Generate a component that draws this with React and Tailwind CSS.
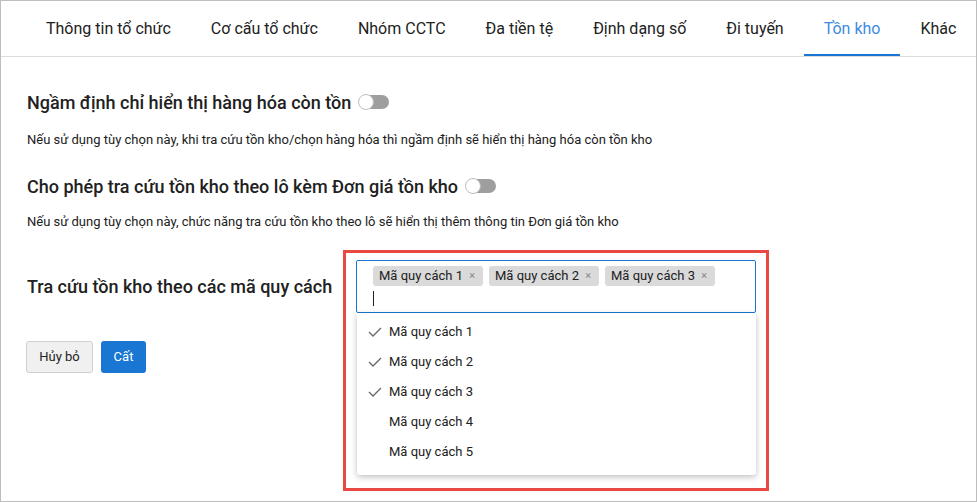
import React from 'react';

const tabs = ['Thông tin tổ chức', 'Cơ cấu tổ chức', 'Nhóm CCTC', 'Đa tiền tệ', 'Định dạng số', 'Đi tuyến', 'Tồn kho', 'Khác'];
const options = [
  { label: 'Mã quy cách 1', checked: true },
  { label: 'Mã quy cách 2', checked: true },
  { label: 'Mã quy cách 3', checked: true },
  { label: 'Mã quy cách 4', checked: false },
  { label: 'Mã quy cách 5', checked: false },
];

const Toggle = () => (
  <div className="relative w-[30px] h-[14px] rounded-full bg-[#9e9e9e] flex items-center">
    <div className="w-[16px] h-[16px] rounded-full bg-white border border-[#bdbdbd] -ml-[1px]" />
  </div>
);

const Check = () => (
  <svg width="14" height="10" viewBox="0 0 14 10" fill="none">
    <path d="M1 5 L5 9 L13 1" stroke="#666" strokeWidth="1.3" />
  </svg>
);

export default function App() {
  return (
    <div className="w-[977px] h-[502px] border border-[#bdbdbd] bg-white overflow-hidden text-[#212121]" style={{ fontFamily: 'Roboto, "Liberation Sans", sans-serif' }}>
      {/* Tabs */}
      <div className="flex h-[56px] border-b border-[#dcdcdc] pl-[25px]">
        {tabs.map((t) => (
          <div
            key={t}
            className={
              'px-5 flex items-center text-[16px] whitespace-nowrap ' +
              (t === 'Tồn kho' ? 'text-[#3d8be0] border-b-2 border-[#1976d2] pt-[2px]' : '')
            }
          >
            {t}
          </div>
        ))}
      </div>

      <div className="pl-[26px] pt-[33px]">
        <div className="flex items-center gap-[8px] h-[24px]">
          <span className="text-[18px] font-medium">Ngầm định chỉ hiển thị hàng hóa còn tồn</span>
          <Toggle />
        </div>
        <div className="mt-[16px] h-[20px] flex items-center text-[13px]">
          Nếu sử dụng tùy chọn này, khi tra cứu tồn kho/chọn hàng hóa thì ngầm định sẽ hiển thị hàng hóa còn tồn kho
        </div>

        <div className="mt-[24px] flex items-center gap-[8px] h-[24px]">
          <span className="text-[18px] font-medium">Cho phép tra cứu tồn kho theo lô kèm Đơn giá tồn kho</span>
          <Toggle />
        </div>
        <div className="mt-[14px] h-[20px] flex items-center text-[13px]">
          Nếu sử dụng tùy chọn này, chức năng tra cứu tồn kho theo lô sẽ hiển thị thêm thông tin Đơn giá tồn kho
        </div>

        <div className="mt-[28px] flex items-center">
          <div className="w-[329px] text-[18px] font-medium">Tra cứu tồn kho theo các mã quy cách</div>
          <div className="relative w-[400px]">
            <div className="h-[53px] border border-[#1976d2] rounded-[2px] pl-[16px] pt-[5px]">
              <div className="flex gap-[6px]">
                {options.slice(0, 3).map((o) => (
                  <div key={o.label} className="h-[20px] w-[110px] bg-[#dadada] rounded-[3px] flex items-center justify-between pl-[6px] pr-[8px] text-[13px]">
                    <span>{o.label}</span>
                    <span className="text-[#888] text-[11px]">×</span>
                  </div>
                ))}
              </div>
              <div className="mt-[5px] w-[1px] h-[15px] bg-[#212121]" />
            </div>

            <div className="absolute left-[1px] top-[53px] w-[399px] h-[162px] bg-white rounded-b-[3px] shadow-[0_2px_6px_rgba(0,0,0,0.25)] pt-[4px] z-10">
              {options.map((o) => (
                <div key={o.label} className="h-[30px] flex items-center text-[13px]">
                  <div className="w-[32px] flex justify-end pr-[7px]">{o.checked && <Check />}</div>
                  <span>{o.label}</span>
                </div>
              ))}
            </div>

            <div className="absolute left-[-13px] top-[-10px] w-[426px] h-[241px] border-[3px] border-[#e84a43] z-20 pointer-events-none" />
          </div>
        </div>

        <div className="mt-[28px] -ml-[1px] flex gap-[8px]">
          <button className="h-[32px] w-[67px] bg-[#f0f0f0] border border-[#d0d0d0] rounded-[3px] text-[13px] text-[#212121]">Hủy bỏ</button>
          <button className="h-[32px] w-[45px] bg-[#1976d2] rounded-[3px] text-[13px] text-white">Cất</button>
        </div>
      </div>
    </div>
  );
}
